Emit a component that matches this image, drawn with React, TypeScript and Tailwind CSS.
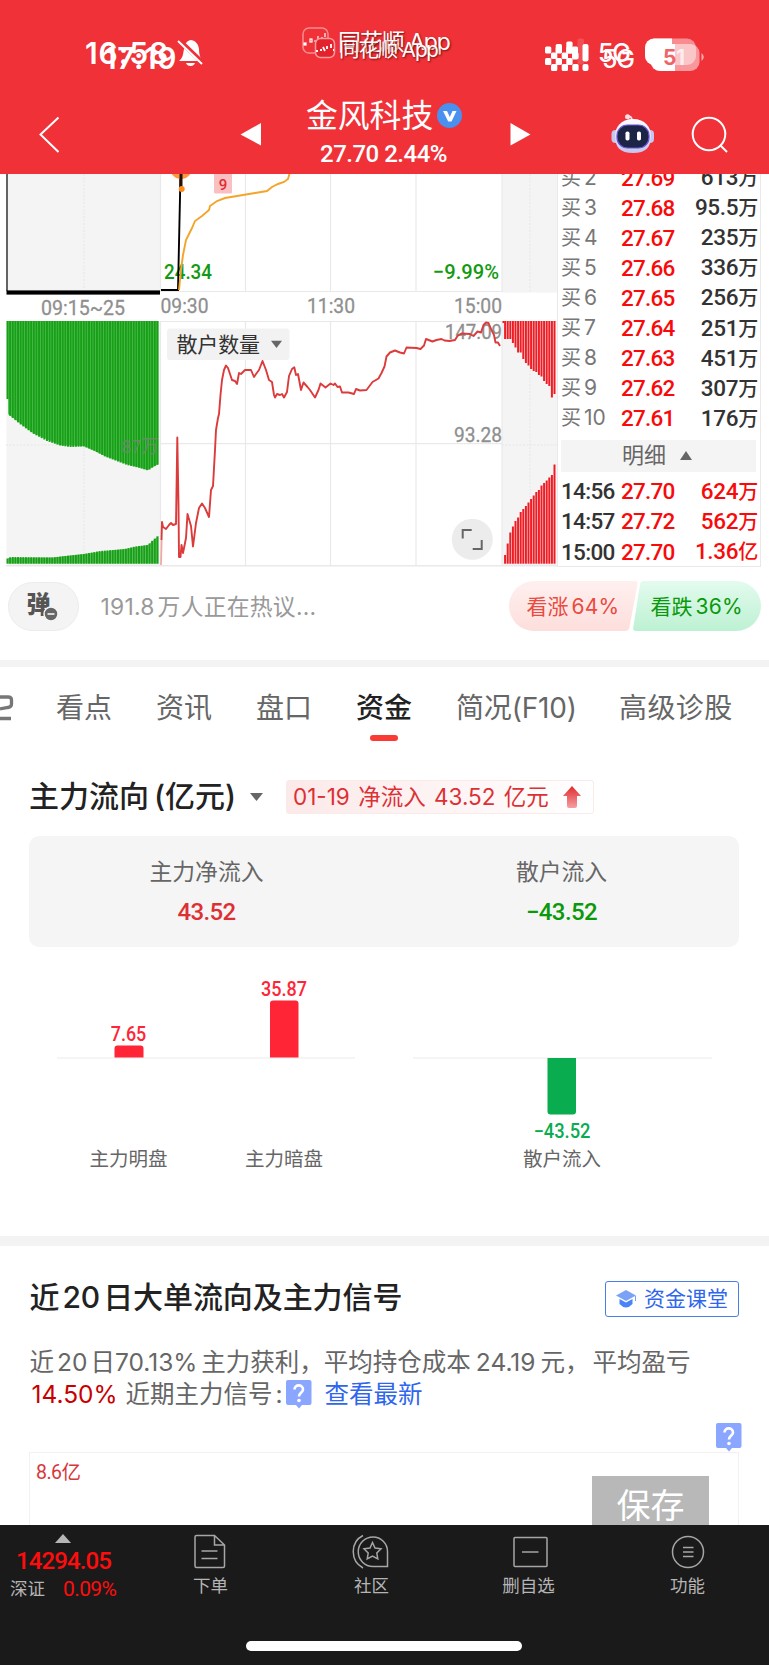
import type { ReactNode } from "react";

type Point = [number, number];

// Lista de compra (买盘)
const bids = [
  { level: "2", price: "27.69", amount: "613万" },
  { level: "3", price: "27.68", amount: "95.5万" },
  { level: "4", price: "27.67", amount: "235万" },
  { level: "5", price: "27.66", amount: "336万" },
  { level: "6", price: "27.65", amount: "256万" },
  { level: "7", price: "27.64", amount: "251万" },
  { level: "8", price: "27.63", amount: "451万" },
  { level: "9", price: "27.62", amount: "307万" },
  { level: "10", price: "27.61", amount: "176万" },
];

const trades = [
  { time: "14:56", price: "27.70", amount: "624万" },
  { time: "14:57", price: "27.72", amount: "562万" },
  { time: "15:00", price: "27.70", amount: "1.36亿" },
];

const averageLine =
  "179,290 181,270 183,255 186,240 192,228 195,221 202,216 209,210 210,206 217,201 225,198 240,195.5 255,193 267,191 272,187 278,184 284,182 288,179 290,172";

const retailLine =
  "161.5,540 162,522 163,527 166,529 169,525 171,523 173,525 176,524 177.3,437.5 178.5,505 179,557 180.5,557 181.5,545 183,553 186,538 187.5,514 191,526 193,546.5 196,523 199,508 202,503.5 205,508 209,517 211,490 213,486 215,450 216,430 218,418 219,414 220.5,395 222,380 224,370 226,365.5 228,368 230,374 232,380 235,381 237,384 239,373 241,374 245,370 251,370 254,377 256,374 259,370 262.5,361 266,370 269,380 272,382 274,395 275,397.5 277,394 280,395 282,394 284,397.5 287,392 289,376 292,369 294.3,367.3 296,375 298,374 301,390 303.5,382.5 307.5,387 310,390 315,397.5 318.5,390 320.5,383.5 325.5,387.5 330.5,383.5 333.5,385 335,383.5 337.5,387 340,386.5 342,392.5 348.5,392.5 354,394 356,389 360,390.5 366.5,390 372.5,382 378.5,378.5 381.5,373 384.5,366.5 386.5,356.5 390,352.5 395,350.5 400,352.5 404,353.5 406.5,347.5 416.5,348 420.5,349 424,345.5 426,339 432.5,341.5 436.5,340 441.5,339 444.5,340.5 449.5,341 455,340 457.5,336 461.5,333.5 470,334 473.5,336 477.5,331.5 481,332.5 483.5,325 486,322.5 488.5,323 491.5,330 494,335 495.5,342.5 498,342.5 500,346";

const greenUpper: Point[] = [[6, 354], [8, 414], [20, 424], [33, 433.5], [47, 441], [60, 445.5], [70, 447], [84, 446.5], [95, 451], [105, 456.5], [127, 465], [140, 468], [148, 470.5], [153, 467], [159, 464]];
const greenLower: Point[] = [[6, 560], [8, 558], [11, 557], [53, 557.5], [65, 556], [84, 554], [100, 551], [125, 549], [135, 546.5], [148, 545], [152, 541], [159, 535]];
const redUpper = [339, 339, 339, 343, 347.5, 352.5, 352.5, 359, 363, 365.5, 369, 371, 372, 375, 376.5, 381, 384, 386, 397.5, 394];
const redLower = [555, 543.5, 532.5, 526.5, 521, 517.5, 512, 509, 506, 502.5, 499, 495.5, 492, 490, 485.5, 483, 480.5, 477.5, 475, 464.5];

function valueAt(points: Point[], x: number) {
  for (let i = 1; i < points.length; i++) {
    const [x0, y0] = points[i - 1];
    const [x1, y1] = points[i];
    if (x <= x1) return y0 + ((y1 - y0) * (x - x0)) / (x1 - x0);
  }
  return points[points.length - 1][1];
}

function StatusBar() {
  return (
    <div className="relative h-[90px] text-white">
      <span className="absolute left-[85px] top-[37px] text-[30px] font-semibold leading-8 tracking-[0.9px]">16:58</span>
      <span className="absolute left-[104px] top-[42px] text-[30px] font-semibold leading-8 tracking-[0.5px]">17:19</span>
      <svg className="absolute left-[177px] top-[38px]" width="28" height="30" viewBox="0 0 28 30">
        <path d="M2 23 C6 20 6 16 7 11 C8 5 10 3 13.500 2 C18 2 21.500 6 22 11 C22 16 23 19 25 23 Z" fill="#fff" />
        <path d="M9 25 H18 C17 29 10 29 9 25 Z" fill="#fff" />
        <path d="M3 3 L26 25" stroke="#ef3038" strokeWidth="4.500" />
        <path d="M1 3 L25 26" stroke="#fff" strokeWidth="2" />
      </svg>

      <svg className="absolute left-[300px] top-[25px]" width="38" height="36" viewBox="0 0 38 36" fill="none">
        <rect x="3" y="3" width="25" height="25" rx="6" stroke="#f58d8f" strokeWidth="1.5" />
        <g stroke="#fff" strokeWidth="1.2">
          <rect x="4" y="18" width="2" height="2" fill="#fff" />
          <rect x="10" y="14" width="2" height="3" />
          <path d="M14 16 h2 M18 11 v4 M22 12 v3 M25 8 v4" />
        </g>
        <rect x="15.500" y="13.500" width="19" height="19" rx="5" fill="#e4222b" stroke="#f79da0" strokeWidth="1.5" />
        <path d="M16 26 h2 M20 25 h2 M23 22 l2 4 M27 21 v3 M31 19 v4 M33 25 h1" stroke="#fff" strokeWidth="1.8" />
      </svg>
      <span className="absolute left-[338px] top-[28px] whitespace-nowrap text-[23px] leading-7 tracking-[-1.1px] [text-shadow:1px_1px_2px_#7b1010]">同花顺 App</span>
      <span className="absolute left-[339px] top-[36px] whitespace-nowrap text-[20.5px] leading-7 tracking-[-1.1px] [text-shadow:1px_1px_2px_#7b1010]">同花顺 App</span>

      <svg className="absolute left-[543px] top-[36px]" width="48" height="38" viewBox="543 36 48 38" fill="#fff">
        {[545, 555.7, 566.3].map((x) => (
          <g key={x}>
            <rect x={x} y="46.500" width="6.300" height="7" rx="1.500" />
            <rect x={x} y="58" width="6.300" height="7" rx="1.500" />
            <rect x={x + 6} y="52.500" width="6.300" height="6.500" rx="1.500" />
            <rect x={x + 6} y="64" width="6.300" height="7" rx="1.500" />
          </g>
        ))}
        <rect x="555.700" y="44" width="6.300" height="9" rx="1.500" />
        <rect x="566.300" y="41.500" width="6.300" height="12" rx="1.500" />
        <rect x="572" y="46.500" width="6" height="13" rx="1.500" />
        <rect x="577.500" y="38.500" width="6.500" height="26" rx="2" opacity="0.150" />
        <rect x="582.500" y="44" width="6" height="17.500" rx="2" />
        <rect x="582.500" y="64" width="6" height="7" rx="2" />
      </svg>
      <span className="absolute left-[598px] top-[39px] text-[25px] font-medium leading-7 tracking-[-1.2px]">5G</span>
      <span className="absolute left-[602px] top-[45px] text-[25px] font-medium leading-7 tracking-[-1.2px]">5G</span>
      <svg className="absolute left-[642px] top-[36px]" width="64" height="38" viewBox="642 36 64 38">
        <rect x="645" y="38.500" width="51" height="26.500" rx="9" fill="#fff" opacity="0.450" />
        <path d="M654 38.500 H672 V65 H654 A9 9 0 0 1 645 56 V47.500 A9 9 0 0 1 654 38.500 Z" fill="#fff" />
        <rect x="650.500" y="44" width="49" height="27" rx="9" fill="#fff" opacity="0.500" />
        <path d="M660 44 H675 V71 H660 A9 9 0 0 1 651 62 V53 A9 9 0 0 1 660 44 Z" fill="#fff" />
        <path d="M701.500 53 Q706 57 701.500 61 Z" fill="#fff" opacity="0.600" />
        <text x="663" y="65" fontSize="21" fontWeight="700" fill="#ee6468">5</text>
        <text x="676" y="65" fontSize="21" fontWeight="700" fill="#fff" opacity="0.700">1</text>
      </svg>
    </div>
  );
}

function TitleBar() {
  return (
    <div className="flex h-[84px] items-start text-white">
      <svg className="ml-[38px] mt-[25px]" width="24" height="40" viewBox="0 0 24 40" fill="none">
        <path d="M20.500 2.500 L2.500 19.500 L20.500 37" stroke="#fff" strokeWidth="2" />
      </svg>
      <svg className="ml-[178px] mt-[33px]" width="21" height="23" viewBox="0 0 21 23">
        <path d="M0.500 11.500 L21 0 V22.500 Z" fill="#fff" />
      </svg>
      <div className="ml-[45px] mt-[8px] w-[160px]">
        <div className="flex h-9 items-center">
          <span className="whitespace-nowrap text-[31.8px] leading-9">金风科技</span>
          <svg className="-mt-[1px] ml-[4px]" width="25" height="25" viewBox="0 0 25 25">
            <circle cx="12.500" cy="12.500" r="12.500" fill="#4a90ee" />
            <path d="M6 8 H10 L12.800 14 L15.500 8 H19.500 L14.500 18.500 H11.200 Z" fill="#fff" />
          </svg>
        </div>
        <div className="ml-[14px] mt-[6px] whitespace-nowrap font-['Roboto',sans-serif] text-[24px] font-medium leading-7 tracking-[-0.5px]">27.70 2.44%</div>
      </div>
      <svg className="ml-[44px] mt-[33px]" width="21" height="23" viewBox="0 0 21 23">
        <path d="M20.500 11.500 L0.500 0 V22.500 Z" fill="#fff" />
      </svg>
      <svg className="ml-[80px] mt-[23px] shrink-0" width="44" height="42" viewBox="0 0 44 42">
        <defs>
          <linearGradient id="robotHead" x1="0" y1="0" x2="0" y2="1">
            <stop offset="0" stopColor="#ffffff" />
            <stop offset="1" stopColor="#c3c5ee" />
          </linearGradient>
        </defs>
        <path d="M16 4 Q21 2 21 8" stroke="#f4dcee" strokeWidth="1.800" fill="none" />
        <circle cx="16.500" cy="3.800" r="2.500" fill="#fbdfe6" />
        <rect x="0.500" y="17" width="8" height="13" rx="4" fill="#c5c7ef" />
        <rect x="35" y="17" width="8" height="13" rx="4" fill="#c5c7ef" />
        <path d="M22 6 C34 6 40 14 40 23 C40 34 35 40 22 40 C9 40 4 34 4 23 C4 14 10 6 22 6 Z" fill="url(#robotHead)" />
        <rect x="6" y="12" width="32" height="23" rx="10.500" fill="#1c2545" stroke="#6a55d8" strokeWidth="1.200" />
        <rect x="14.500" y="18.500" width="4" height="9" rx="1.800" fill="#fff" />
        <rect x="26" y="18.500" width="4" height="9" rx="1.800" fill="#fff" />
      </svg>
      <svg className="ml-[35px] mt-[25px] shrink-0" width="40" height="40" viewBox="0 0 40 40" fill="none" stroke="#fff" strokeWidth="2">
        <circle cx="19" cy="19" r="16.300" />
        <path d="M30 30 L37 37" />
      </svg>
    </div>
  );
}

function IntradayChart() {
  const greenBars = Array.from({ length: 58 }, (_, i) => 6.5 + i * 2.63);
  return (
    <svg width="557" height="393" viewBox="0 174 557 393" className="block shrink-0 font-['Roboto','Noto_Sans_CJK_SC',sans-serif] text-[21px]">
      <rect x="6.500" y="174" width="154" height="118" fill="#f4f4f4" />
      <rect x="6.500" y="321" width="154" height="245" fill="#f4f4f4" />
      <rect x="502" y="174" width="55" height="118.500" fill="#f4f4f4" />
      <rect x="502" y="321" width="55" height="245" fill="#f4f4f4" />

      <g stroke="#e9e9e9" strokeWidth="1.200">
        <path d="M160.500 174 V291.500 M245.500 174 V291.500 M330.500 174 V291.500 M416 174 V291.500 M502 174 V291.500" />
        <path d="M160.500 321.500 V565 M245.500 321.500 V565 M330.500 321.500 V565 M416 321.500 V565 M502 321.500 V565" />
        <path d="M160 291.500 H502 M160 321.500 H557 M160 443.700 H502" />
        <path d="M6 565.800 H557" strokeWidth="1.500" />
      </g>
      <path d="M84 174 V290 M84 321 V565 M530 174 V292 M530 321 V565 M6 445 H160 M502 445 H557" stroke="#e6e6e6" strokeDasharray="2 1.500" />

      <path d="M7 174 V291" stroke="#000" strokeWidth="1.200" />
      <rect x="6.500" y="290.400" width="153.500" height="4.200" fill="#000" />

      {/* Barras do leilão de abertura */}
      <path d="M8 321 H158.500 V464 L153 467 L148 470 L127 464 L105 456 L84 446 L60 445 L33 433 L8 414 Z" fill="#5cc45c" />
      <path d="M8 563.500 V558 L53 557.500 L84 554 L125 549 L148 545 L158.500 536 V563.500 Z" fill="#7bcb7b" />
      <g fill="#17a017">
        {greenBars.map((x) => (
          <g key={x}>
            <rect x={x} y="321" width="2" height={valueAt(greenUpper, x + 1) - 321} />
            <rect x={x} y={valueAt(greenLower, x + 1)} width="2" height={563.7 - valueAt(greenLower, x + 1)} />
          </g>
        ))}
      </g>

      <rect x="502.500" y="321" width="1.500" height="2" fill="#ef1c24" />
      <g fill="#ef1c24">
        {redUpper.map((bottom, i) => (
          <g key={i}>
            <rect x={504.1 + i * 2.6} y="321" width="2" height={bottom - 321} />
            <rect x={504.1 + i * 2.6} y={redLower[i]} width="2" height={563.7 - redLower[i]} />
          </g>
        ))}
      </g>

      <g fontWeight="500" fill="#129a12">
        <text x="164" y="279" textLength="48" lengthAdjust="spacingAndGlyphs">24.34</text>
        <text x="433" y="279" textLength="66" lengthAdjust="spacingAndGlyphs">−9.99%</text>
      </g>
      <path d="M161 290 H178 L180.500 174" stroke="#000" strokeWidth="1.900" fill="none" />
      <polyline points={averageLine} fill="none" stroke="#f5a42b" strokeWidth="1.900" />
      <circle cx="181" cy="168" r="11" fill="#ff9740" />
      <path d="M181 174 V187" stroke="#241200" strokeWidth="3" />
      <circle cx="181.700" cy="189" r="3" fill="#ff8a1c" />
      <rect x="214" y="170" width="18" height="23.500" rx="1.500" fill="#f9bfc1" />
      <text x="218.800" y="190" fontSize="15" fontWeight="500" fill="#e02b33">9</text>

      <g fill="#8f8f8f" stroke="#8f8f8f" strokeWidth="0.300">
        <text x="41" y="314.500" textLength="84" lengthAdjust="spacingAndGlyphs">09:15~25</text>
        <text x="160.500" y="313" textLength="48" lengthAdjust="spacingAndGlyphs">09:30</text>
        <text x="307" y="313" textLength="48" lengthAdjust="spacingAndGlyphs">11:30</text>
        <text x="454" y="313" textLength="48" lengthAdjust="spacingAndGlyphs">15:00</text>
        <text x="445" y="338.500" textLength="57" lengthAdjust="spacingAndGlyphs">147.09</text>
        <text x="454" y="442" textLength="48" lengthAdjust="spacingAndGlyphs">93.28</text>
        <text x="121.500" y="453" fontSize="19" textLength="37" lengthAdjust="spacingAndGlyphs" fill="#6f8a6f" stroke="none" opacity="0.850">87万</text>
      </g>

      <path d="M161 565 L161.700 540" stroke="#f6a5a5" strokeWidth="1.700" />
      <polyline points={retailLine} fill="none" stroke="#dc3b3b" strokeWidth="1.900" strokeLinejoin="round" />

      <rect x="167" y="328.500" width="122.500" height="31.500" rx="3" fill="#f1f1f1" fillOpacity="0.950" />
      <text x="176.500" y="352" fill="#333" textLength="83.500">散户数量</text>
      <path d="M271 340.800 H282 L276.500 348 Z" fill="#666" />

      <circle cx="472.300" cy="539.300" r="20.500" fill="#ececec" />
      <path d="M462.700 538.500 V530 H471.700 M481.700 540 V549 H472.700" fill="none" stroke="#666" strokeWidth="2" />
    </svg>
  );
}

function OrderBook() {
  return (
    <div className="h-[393px] w-[204px] overflow-hidden border-x border-b border-[#e9e9e9] font-['Roboto','Noto_Sans_CJK_SC',sans-serif]">
      <div className="-mt-[11.500px]">
        {bids.map((row) => (
          <div key={row.level} className="flex h-[30.1px] items-center pl-[3px] pr-[2px] text-[22.5px] font-medium leading-[30px]">
            <span className="w-[60px] whitespace-nowrap font-['Inter','Noto_Sans_CJK_SC',sans-serif] text-[20px] font-normal text-[#777]">
              买<span className="ml-[3px] text-[21px]">{row.level}</span>
            </span>
            <span className="w-[56px] tracking-[-0.8px] text-[#f80a0a]">{row.price}</span>
            <span className="flex-1 whitespace-nowrap text-right tracking-[-0.3px] text-[#333]">
              {row.amount.slice(0, -1)}
              <span className="text-[20px]">{row.amount.slice(-1)}</span>
            </span>
          </div>
        ))}
      </div>
      <div className="ml-[3px] mt-[6.500px] flex h-8 w-[195px] items-center bg-[#f4f4f4] pl-[61px] text-[22px] leading-8 text-[#666]">
        明细
        <svg className="ml-[14px]" width="12" height="9" viewBox="0 0 12 9">
          <path d="M0 9 L6 0 L12 9 Z" fill="#666" />
        </svg>
      </div>
      <div className="mt-[4px]">
        {trades.map((row) => (
          <div key={row.time} className="flex h-[30.300px] items-center pl-[3px] pr-[2px] text-[22.5px] font-medium leading-[30px] text-[#f80a0a]">
            <span className="w-[60px] tracking-[-0.7px] text-[#333]">{row.time}</span>
            <span className="w-[56px] tracking-[-0.8px]">{row.price}</span>
            <span className="flex-1 whitespace-nowrap text-right tracking-[-0.3px]">
              {row.amount.slice(0, -1)}
              <span className="text-[20px]">{row.amount.slice(-1)}</span>
            </span>
          </div>
        ))}
      </div>
    </div>
  );
}

function CommentBar() {
  return (
    <div className="flex h-[93px] items-start pt-[14px]">
      <div className="relative ml-[7.500px] mt-[1px] h-[49px] w-[71px] rounded-full border border-[#ececec] bg-[#f4f4f4]">
        <span className="absolute left-[18px] top-[7px] text-[24px] font-black leading-[30px] text-[#555]">弹</span>
        <svg className="absolute left-[34px] top-[23px]" width="16" height="16" viewBox="0 0 16 16">
          <circle cx="8" cy="8" r="7" fill="#666" stroke="#f4f4f4" strokeWidth="1.500" />
          <path d="M4.500 8 H11.500" stroke="#fff" strokeWidth="1.500" />
        </svg>
      </div>
      <span className="ml-[22px] mt-[10px] w-[408px] whitespace-nowrap text-[22.8px] leading-8 tracking-[0.25px] text-[#999]">191.8<span className="ml-[3px]">万人正在热议...</span></span>
      <div className="relative h-[50px] w-[253px]">
        <svg className="absolute inset-0" width="253" height="50" viewBox="0 0 253 50">
          <defs>
            <linearGradient id="bull" x1="0" y1="0" x2="0" y2="1">
              <stop offset="0" stopColor="#fef0ef" />
              <stop offset="1" stopColor="#fddedc" />
            </linearGradient>
            <linearGradient id="bear" x1="0" y1="0" x2="0" y2="1">
              <stop offset="0" stopColor="#e3fbee" />
              <stop offset="1" stopColor="#bdf1d3" />
            </linearGradient>
          </defs>
          <path d="M25 0 H126 Q129 0 128.500 3 L120.500 46 Q120 50 116 50 H25 A25 25 0 0 1 25 0 Z" fill="url(#bull)" />
          <path d="M135 0 H227 A25 25 0 0 1 227 50 H127 Q123.500 50 124.300 46.500 L131 3.500 Q131.500 0 135 0 Z" fill="url(#bear)" />
        </svg>
        <div className="relative flex whitespace-nowrap pl-[18px] pt-[10px] text-[21px] leading-8">
          <span className="w-[124px] text-[#ea4a40]">看涨<span className="ml-[3px] tracking-[0.2px]">64%</span></span>
          <span className="text-[#0a990a]">看跌<span className="ml-[3px] tracking-[0.2px]">36%</span></span>
        </div>
      </div>
    </div>
  );
}

function Tabs() {
  return (
    <div className="flex h-[102px] border-t-[7.500px] border-[#f3f3f3] pt-[23px] text-[28px] leading-9 text-[#666]">
      <svg className="mt-[5px]" width="14" height="27" viewBox="0 0 14 27" fill="none">
        <path d="M0 2 H8 Q11.500 2 11.500 5 V9 Q11.500 12 8 12.500 L0 14 M0 23.500 H11" stroke="#777" strokeWidth="3.300" />
      </svg>
      <div className="ml-[42px] flex gap-[44px] whitespace-nowrap">
        <span>看点</span>
        <span>资讯</span>
        <span>盘口</span>
        <div className="flex flex-col items-center font-medium text-[#222]">
          资金
          <span className="mt-[9px] h-[6px] w-7 rounded-full bg-[#fa3a35]" />
        </div>
        <span className="w-[119px] tracking-[-0.2px]">简况(F10)</span>
        <span className="tracking-[0.4px]">高级诊股</span>
      </div>
    </div>
  );
}

function FlowHeader() {
  return (
    <div className="flex h-[74px] items-start pl-[29px] pt-[6px]">
      <h2 className="mt-[10px] w-[221px] whitespace-nowrap text-[30px] font-medium leading-9 text-[#222]">主力流向<span className="ml-[5px]">(亿元)</span></h2>
      <svg className="mt-[25px]" width="13" height="8" viewBox="0 0 13 8">
        <path d="M0 0 H13 L6.500 8 Z" fill="#666" />
      </svg>
      <div className="ml-[23px] mt-[11.500px] flex h-[34px] w-[308px] items-center rounded-[3px] border border-[#fbeaea] bg-linear-to-r from-[#fce9e9] to-white pl-[6px]">
        <span className="w-[270px] whitespace-nowrap text-[22.500px] leading-8 text-[#dd3035] [word-spacing:2px]">01-19 净流入 43.52 亿元</span>
        <svg width="18" height="22" viewBox="0 0 18 22">
          <defs>
            <linearGradient id="arrowUp" x1="0" y1="0" x2="0" y2="1">
              <stop offset="0" stopColor="#e02a2e" />
              <stop offset="1" stopColor="#f4a0a2" />
            </linearGradient>
          </defs>
          <path d="M9 0 L18 10 H14 V20 Q14 22 12 22 H6 Q4 22 4 20 V10 H0 Z" fill="url(#arrowUp)" />
        </svg>
      </div>
    </div>
  );
}

function Summary() {
  return (
    <div className="ml-[29px] mr-[30px] grid h-[111px] grid-cols-2 rounded-[10px] bg-[#f5f5f5] pt-[20px] text-center">
      <div>
        <div className="text-[22.800px] leading-8 text-[#666]">主力净流入</div>
        <div className="mt-[8px] font-['Roboto',sans-serif] text-[24px] font-medium leading-8 tracking-[-0.600px] text-[#dd3035]">43.52</div>
      </div>
      <div>
        <div className="text-[22.800px] leading-8 text-[#666]">散户流入</div>
        <div className="mt-[8px] font-['Roboto',sans-serif] text-[24px] font-medium leading-8 tracking-[-0.600px] text-[#0a990a]">−43.52</div>
      </div>
    </div>
  );
}

function FlowChart() {
  return (
    <svg width="769" height="289" viewBox="0 947 769 289" className="block font-['Roboto','Noto_Sans_CJK_SC',sans-serif]" textAnchor="middle">
      <path d="M57 1058 H355 M413 1058 H712" stroke="#ececec" strokeWidth="1.200" />
      <path d="M114.500 1057.500 V1048.500 Q114.500 1045.500 117.500 1045.500 H140.500 Q143.500 1045.500 143.500 1048.500 V1057.500 Z" fill="#ff2436" />
      <path d="M270 1057.500 V1003.500 Q270 1000.500 273 1000.500 H295.500 Q298.500 1000.500 298.500 1003.500 V1057.500 Z" fill="#ff2436" />
      <path d="M547.500 1058 V1111.500 Q547.500 1114.500 550.500 1114.500 H573 Q576 1114.500 576 1111.500 V1058 Z" fill="#09ac4f" />
      <g fontSize="19.500" fontWeight="500">
        <text x="128.500" y="1040.500" fill="#ff2436" textLength="35.500" lengthAdjust="spacingAndGlyphs">7.65</text>
        <text x="284" y="995.500" fill="#ff2436" textLength="46" lengthAdjust="spacingAndGlyphs">35.87</text>
        <text x="562" y="1138" fill="#09ac4f" textLength="57" lengthAdjust="spacingAndGlyphs">−43.52</text>
      </g>
      <g fontSize="19.500" fill="#666">
        <text x="128.500" y="1166">主力明盘</text>
        <text x="284" y="1166">主力暗盘</text>
        <text x="562" y="1166">散户流入</text>
      </g>
    </svg>
  );
}

function HelpBadge() {
  return (
    <svg width="26" height="29" viewBox="0 0 26 29" className="shrink-0">
      <path d="M2 0 H23.500 Q25.500 0 25.500 2 V23 Q25.500 25 23.500 25 H16 L13 28.500 L10 25 H2 Q0 25 0 23 V2 Q0 0 2 0 Z" fill="#8aa6ff" />
      <path d="M8.500 9.500 C8.500 4 17 4 17 9.500 C17 12.500 13 12.500 13 16.500" fill="none" stroke="#fff" strokeWidth="2.600" />
      <circle cx="13" cy="20.500" r="1.800" fill="#fff" />
    </svg>
  );
}

function SignalSection() {
  return (
    <section className="h-[289px] overflow-hidden border-t-[10.500px] border-[#f3f3f3]">
      <div className="flex justify-between pl-[29.500px] pr-[30px] pt-[33px]">
        <h2 className="whitespace-nowrap text-[30px] font-medium leading-9 tracking-[-0.080px] text-[#222]">
          近<span className="mx-[3px]">20</span>日大单流向及主力信号
        </h2>
        <button className="mt-[2px] flex h-9 w-[134px] items-center rounded-[3px] border border-[#4a7de8] pl-[10px] text-[21px] leading-8 text-[#2f66ee]">
          <svg width="21" height="19" viewBox="0 0 21 19">
            <path d="M10 0 L20 5.500 L10 11 L0 5.500 Z" fill="#7ba2f7" />
            <path d="M3.500 9 L10 12.600 L16.500 9 V14 Q10 21 3.500 14 Z" fill="#4a83f7" />
            <path d="M19.500 6 V11" stroke="#7ba2f7" />
          </svg>
          <span className="ml-[7px] whitespace-nowrap">资金课堂</span>
        </button>
      </div>
      <div className="mt-[29px] whitespace-nowrap pl-[29.500px] text-[24.500px] leading-8 text-[#666]">
        <div>近<span className="mx-[3px]">20</span>日70.13%<span className="ml-[4px]">主力获利，平均持仓成本</span><span className="mx-[5px]">24.19</span>元，<span className="ml-[3px]">平均盈亏</span></div>
        <div className="flex">
          <span className="ml-[2px] w-[94px] text-[#c80000]">14.50%</span>
          <span className="w-[160px]">近期主力信号<span className="ml-[3px]">:</span></span>
          <div className="mt-[2px]"><HelpBadge /></div>
          <span className="ml-[13px] text-[#2f66ee]">查看最新</span>
        </div>
      </div>
      <div className="mt-[13px] flex justify-end pr-[27.500px]">
        <HelpBadge />
      </div>
      <div className="ml-[29px] mr-[30px] flex h-[80px] justify-between border border-[#f4f1f1] pl-[6px] pr-[29px]">
        <span className="mt-[5px] font-['Roboto','Noto_Sans_CJK_SC',sans-serif] text-[19.500px] leading-[30px] tracking-[-0.500px] text-[#d8363a]">8.6亿</span>
        <div className="mt-[23px] w-[117px] bg-[#b8b8b8] pt-[8px] text-center text-[34px] leading-[44px] text-white">保存</div>
      </div>
    </section>
  );
}

function NavItem({ label, className, children }: { label: string; className: string; children: ReactNode }) {
  return (
    <div className={className}>
      <svg width="40" height="36" viewBox="0 0 40 36" fill="none" stroke="#a6a6a6" strokeWidth="1.500">
        {children}
      </svg>
      <span className="mt-[5px] whitespace-nowrap text-[17.500px] leading-6 text-[#b5b5b5]">{label}</span>
    </div>
  );
}

function BottomNav() {
  return (
    <nav className="relative flex h-[140px] bg-[#1a1a1a] pt-[8px]">
      <div className="w-[125px] whitespace-nowrap">
        <svg className="ml-[55px] mt-[1px]" width="16" height="9" viewBox="0 0 16 9">
          <path d="M0 9 L8 0 L16 9 Z" fill="#b5b5b5" />
        </svg>
        <div className="ml-[16px] mt-[4px] font-['Roboto',sans-serif] text-[24px] font-medium leading-7 tracking-[-0.900px] text-[#ff0d0d]">14294.05</div>
        <div className="mt-px flex pl-[10px] text-[17.500px] leading-[26px] text-[#b5b5b5]">
          <span className="w-[53px]">深证</span>
          <span className="font-['Roboto',sans-serif] text-[21px] tracking-[-0.600px] text-[#ff0d0d]">0.09%</span>
        </div>
      </div>
      <NavItem label="下单" className="ml-[45.500px] flex w-20 flex-col items-center">
        <path d="M4 4 Q4 2.500 5.500 2.500 H23.500 L33.500 12 V33 Q33.500 34.500 32 34.500 H5.500 Q4 34.500 4 33 Z M23.500 2.500 V12 H33.500 M10.500 18 H26.500 M10.500 25.500 H26.500" />
      </NavItem>
      <NavItem label="社区" className="ml-[81px] flex w-20 flex-col items-center">
        <path d="M21 4 A14.500 14.500 0 0 0 21 33.500 H35.500 V18.500 A14.500 14.500 0 0 0 21 4 Z M11 2.500 C-2 9 -2 28 11 35" />
        <path d="M20.500 9.500 L23 15 L29 15.800 L24.800 20 L25.800 26 L20.500 23.200 L15.200 26 L16.200 20 L12 15.800 L18 15 Z" />
      </NavItem>
      <NavItem label="删自选" className="ml-[77px] flex w-20 flex-col items-center">
        <rect x="5" y="4.500" width="33" height="29" rx="1" />
        <path d="M13 19 H29.500" />
      </NavItem>
      <NavItem label="功能" className="ml-[79px] flex w-20 flex-col items-center">
        <circle cx="20" cy="19" r="15.500" />
        <path d="M15 14.500 H25.500 M15 19 H25.500 M15 23.500 H25.500" />
      </NavItem>
      <div className="absolute left-[246px] top-[116px] h-[9.500px] w-[276px] rounded-full bg-white" />
    </nav>
  );
}

export default function App() {
  return (
    <div className="h-[1665px] w-[769px] overflow-hidden bg-white font-['Inter','Noto_Sans_CJK_SC',sans-serif]">
      <header className="h-[174px] bg-[#f03138]">
        <StatusBar />
        <TitleBar />
      </header>
      <div className="flex">
        <IntradayChart />
        <OrderBook />
      </div>
      <CommentBar />
      <Tabs />
      <FlowHeader />
      <Summary />
      <FlowChart />
      <SignalSection />
      <BottomNav />
    </div>
  );
}
